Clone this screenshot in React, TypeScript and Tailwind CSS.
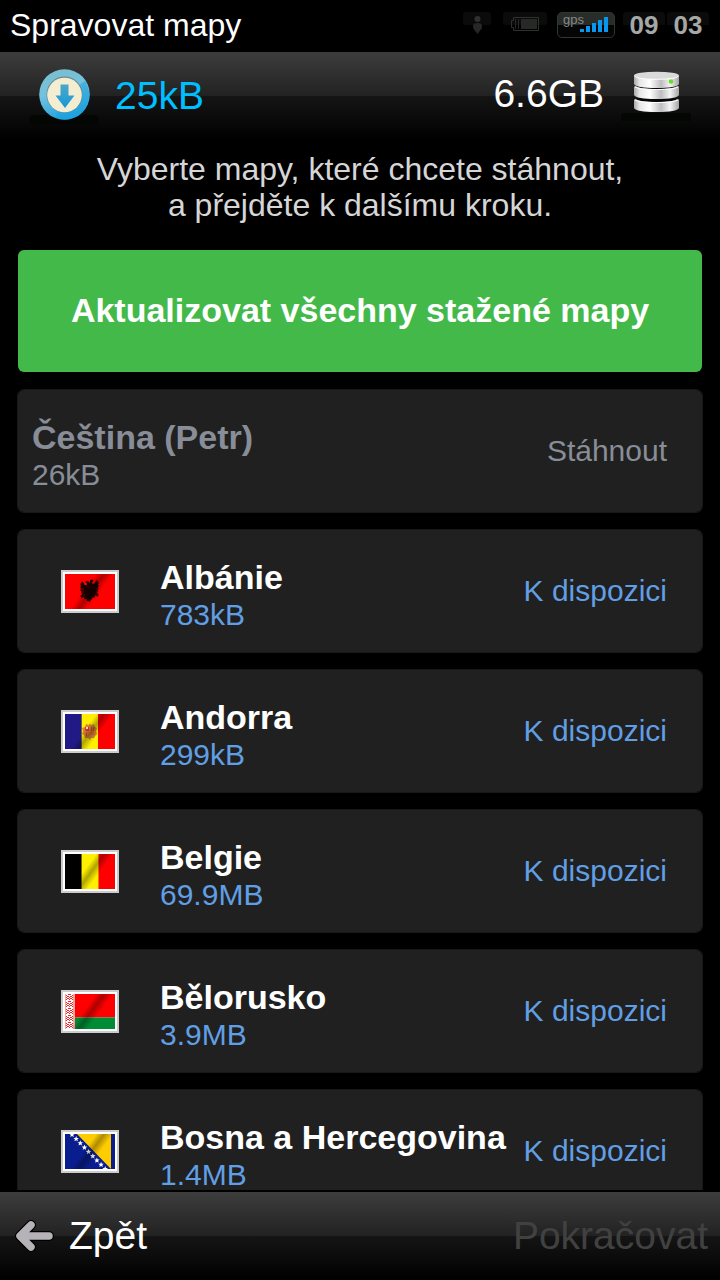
import type { ReactNode } from 'react';

type FlagCode = 'al' | 'ad' | 'be' | 'by' | 'ba';

interface MapItem {
  code: FlagCode;
  name: string;
  size: string;
}

const maps: MapItem[] = [
  { code: 'al', name: 'Albánie', size: '783kB' },
  { code: 'ad', name: 'Andorra', size: '299kB' },
  { code: 'be', name: 'Belgie', size: '69.9MB' },
  { code: 'by', name: 'Bělorusko', size: '3.9MB' },
  { code: 'ba', name: 'Bosna a Hercegovina', size: '1.4MB' },
];

const star = 'M0 -2.8L.8 -.9L2.8 -.8L1.2 .5L1.8 2.5L0 1.4L-1.8 2.5L-1.2 .5L-2.8 -.8L-.8 -.9Z';

const flagArt: Record<FlagCode, ReactNode> = {
  al: (
    <>
      <rect width="50" height="35" fill="#ff0000" />
      <path
        fill="#1c0000"
        d="M25 10l-1-2.500-3-.5-.5 1.500 1.500 1-.5 2-2-.5-1.500-3-1.500-.5v2l-1-.3v2l.8.6-.8.6v1.500l.8.5-.8.8.2 1.500.8.4-.5 1 .5 1.200 1 .2-1.500 2h-.5v1.500l1 .5.3 1 1.200-1.200 1.500-.4-.5 1.600 1.500.8 1-.8.5 2.500 1-.3L25 28l1-2.800 1 .3.5-2.500 1 .8 1.500-.8-.5-1.600 1.500.4 1.200 1.200.3-1 1-.5v-1.500h-.5l-1.500-2 1-.2.5-1.200-.5-1 .8-.4.2-1.500-.8-.8.8-.5v-1.500l-.8-.6.8-.6v-2l-1 .3v-2l-1.500.5-1.500 3-2 .5-.5-2 1.500-1-.5-1.500-3 .5z"
      />
      <path d="M16 15h3M16 18h3M31 15h3M31 18h3M18 21h2M30 21h2M20 23v1M30 23v1" stroke="#a80000" strokeWidth="0.7" />
    </>
  ),
  ad: (
    <>
      <rect width="17" height="35" fill="#211a86" />
      <rect x="16" width="17" height="35" fill="#ffee00" />
      <rect x="33" width="17" height="35" fill="#ff0000" />
      <path d="M16.500 0v35" stroke="#6b6740" />
      <path
        fill="#d88530"
        d="M21 10l3 1 1-2 1 2 3-1 1 3 2 1-1 3 1 3-2 2-1 2-3 0-1 2-2-2-3 0-1-3-2-1 1-3-1-3 3-1z"
      />
      <rect x="20" y="13" width="4" height="4" fill="#e5352b" />
      <path d="M21 13h2v2h-2zM26 19h2v1h-2z" fill="#f5e3c8" />
      <path d="M26.500 13v4M28.500 13v4M21.500 18v4" stroke="#d8452a" strokeWidth="1" />
      <rect x="25" y="18" width="4" height="3" fill="#ea6a22" />
    </>
  ),
  be: (
    <>
      <rect width="17" height="35" fill="#000000" />
      <rect x="16" width="18" height="35" fill="#fff000" />
      <rect x="33" width="17" height="35" fill="#ff0000" />
      <path d="M16.500 0v35" stroke="#776d00" />
      <path d="M33.500 0v35" stroke="#f07a00" />
    </>
  ),
  by: (
    <>
      <rect width="50" height="23.500" fill="#ff0000" />
      <rect y="23.500" width="50" height="11.500" fill="#008c34" />
      <rect width="10" height="35" fill="#ff9f98" />
      <rect x="1" width="7" height="35" fill="#ffffff" />
      {[0, 7, 14, 21, 28].map((y) => (
        <path
          key={y}
          transform={`translate(0 ${y})`}
          d="M1 1h1v1H1zM3 0h3v1H3zM7 1h1v1H7zM2 2h2v1H2zM5 2h2v1H5zM4 3h1v1H4zM2 4h2v1H2zM5 4h2v1H5zM1 5h1v1H1zM4 5h1v1H4zM7 5h1v1H7zM1 3h1v1H1zM7 3h1v1H7z"
          fill="#ee2525"
        />
      ))}
    </>
  ),
  ba: (
    <>
      <rect width="50" height="35" fill="#0a1d8e" />
      <path d="M12 0h34v35z" fill="#ffcc00" />
      {[0, 1, 2, 3, 4, 5, 6, 7, 8].map((i) => (
        <path key={i} d={star} transform={`translate(${7 + i * 4.15} ${0.5 + i * 4.3})`} fill="#ffffff" />
      ))}
    </>
  ),
};

function Flag({ code }: { code: FlagCode }) {
  return (
    <span className="shrink-0 border-2 border-[#cccccc] bg-white p-0.5">
      <svg width="50" height="35" viewBox="0 0 50 35" className="block" aria-hidden="true">
        <defs>
          <linearGradient id={`fold-${code}`} gradientUnits="userSpaceOnUse" x1="20" y1="12" x2="35" y2="23">
            <stop offset="0.1" stopColor="#000" stopOpacity="0" />
            <stop offset="0.45" stopColor="#000" stopOpacity="0.32" />
            <stop offset="0.85" stopColor="#000" stopOpacity="0" />
          </linearGradient>
        </defs>
        {flagArt[code]}
        <path d="M0 0h50v35H0z" fill={`url(#fold-${code})`} />
      </svg>
    </span>
  );
}

function DownloadIcon() {
  return (
    <svg width="72" height="64" viewBox="0 0 72 64" className="shrink-0" aria-hidden="true">
      <defs>
        <linearGradient id="ring" x1="0" y1="0" x2="0.3" y2="1">
          <stop offset="0" stopColor="#7dbdcc" />
          <stop offset="0.5" stopColor="#73c3df" />
          <stop offset="1" stopColor="#25a4df" />
        </linearGradient>
        <linearGradient id="arrow" x1="0" y1="0" x2="0" y2="1">
          <stop offset="0" stopColor="#4fa7c6" />
          <stop offset="1" stopColor="#1598dc" />
        </linearGradient>
      </defs>
      <rect x="1" y="51" width="70" height="10" rx="5" fill="#030603" />
      <circle cx="36.500" cy="30.500" r="25.300" fill="url(#ring)" />
      <path d="M37 31L57 17A25 25 0 0 1 27 54z" fill="#1ca0de" opacity="0.5" />
      <circle cx="36.500" cy="30.500" r="18" fill="#6b8b8f" />
      <circle cx="36.500" cy="31" r="17.300" fill="#f3eed2" />
      <path d="M32.500 20.500h8v11h6L37 44l-9.500-12.500h5z" fill="url(#arrow)" />
    </svg>
  );
}

function StorageIcon() {
  return (
    <svg width="70" height="54" viewBox="0 0 70 54" className="shrink-0" aria-hidden="true">
      <defs>
        <linearGradient id="disk">
          <stop offset="0" stopColor="#a9a9a9" />
          <stop offset="0.12" stopColor="#e6e6e6" />
          <stop offset="0.35" stopColor="#ffffff" />
          <stop offset="0.6" stopColor="#bdbdc0" />
          <stop offset="0.8" stopColor="#f4f4f4" />
          <stop offset="1" stopColor="#a4a4a4" />
        </linearGradient>
      </defs>
      <rect y="46" width="70" height="8" rx="2" fill="#030603" />
      {[33, 20].map((y) => (
        <g key={y} transform={`translate(13 ${y})`}>
          <ellipse cx="22.500" cy="0" rx="21" ry="3.500" fill="#050505" />
          <path d="M0 0Q0 -1 2 -1Q5 2 22.500 2Q40 2 43 -1Q45 -1 45 0V8Q43 12 22.500 12Q2 12 0 8z" fill="url(#disk)" />
          <path d="M1 0Q5 2.500 22.500 2.500Q40 2.500 44 0" fill="none" stroke="#ffffff" />
        </g>
      ))}
      <path d="M13 9V17Q15 21 35.500 21Q56 21 58 17V9z" fill="url(#disk)" />
      <ellipse cx="35.500" cy="8.500" rx="22.500" ry="3.800" fill="#dadada" />
      <path d="M13.500 9Q15 12.300 35.500 12.300Q56 12.300 57.500 9" fill="none" stroke="#ffffff" />
      <circle cx="50" cy="14.500" r="2.300" fill="#63e02a" />
    </svg>
  );
}

function StatusIcons() {
  return (
    <div className="flex items-center">
      <svg width="28" height="26" viewBox="0 0 28 26" aria-label="Profil">
        <rect width="28" height="13" rx="3" fill="#0b0b0b" />
        <circle cx="14.500" cy="7" r="3" fill="#303030" />
        <path d="M10 14q0-3 4.500-3t4.500 3q0 3-1.500 4l-3 4-3-4q-1.500-1-1.500-4z" fill="#252825" />
      </svg>
      <svg width="44" height="26" viewBox="0 0 44 26" className="ml-3" aria-label="Baterie">
        <rect width="44" height="13" rx="3" fill="#0b0b0b" />
        <path d="M10.500 5.500h25v13h-25v-3h-2v-7h2z" fill="none" stroke="#2f302f" />
        <path d="M12 7h1v10h-1zM15 7h1v10h-1zM18 7h16v10H18z" fill="#272927" />
      </svg>
      <div className="relative ml-2.5 h-[26px] w-[58px] overflow-hidden rounded-[5px] border border-[#303630] bg-linear-to-b from-[#292d29] from-50% to-[#050505] to-50%">
        <span className="absolute top-0 left-[5px] text-[13px] leading-[14px] text-[#858885]">gps</span>
        <svg width="29" height="15" viewBox="0 0 29 15" className="absolute top-1 left-[22px]" aria-hidden="true">
          <path d="M0 12h4v3H0zM6 9h4v6H6zM12 6h4v9h-4zM18 3h4v12h-4zM24 0h4v15h-4z" fill="#0896ef" />
        </svg>
      </div>
      <time className="ml-2 flex gap-0.5 text-[26px] leading-[26px] font-bold text-[#a5a8a5]">
        <span className="w-[42px] rounded bg-linear-to-b from-[#0b0b0b] from-50% to-black to-50% text-center">09</span>
        <span className="w-[42px] rounded bg-linear-to-b from-[#0b0b0b] from-50% to-black to-50% text-center">03</span>
      </time>
    </div>
  );
}

export default function App() {
  return (
    <div className="flex h-screen flex-col bg-black font-['Liberation_Sans',Arial,sans-serif] text-white">
      <header className="flex h-[52px] shrink-0 items-center justify-between pr-[11px] pb-[3px] pl-[10px]">
        <h1 className="text-[32px] leading-9">Spravovat mapy</h1>
        <StatusIcons />
      </header>

      <section className="flex h-[88px] shrink-0 items-center justify-between bg-[linear-gradient(#3d3d3d,#222_50%,#151515_50%,#000)] pr-[29px] pl-7 text-[39px] leading-[44px]">
        <div className="flex items-center gap-[15px] text-[#00bfff]">
          <DownloadIcon />
          <span>25kB</span>
        </div>
        <div className="flex items-center gap-[17px] pb-1">
          <span>6.6GB</span>
          <StorageIcon />
        </div>
      </section>

      <main className="min-h-0 flex-1 overflow-y-auto px-[18px] pt-[11px] [scrollbar-width:none]">
        <p className="text-center text-[32px] leading-9 text-[#d6d6d6]">
          Vyberte mapy, které chcete stáhnout,
          <br />a přejděte k dalšímu kroku.
        </p>

        <button
          type="button"
          className="mt-[27px] block h-[122px] w-full rounded-md bg-[#43b94a] pb-0.5 text-[34px] leading-10 font-bold"
        >
          Aktualizovat všechny stažené mapy
        </button>

        <ul className="mt-[18px] flex flex-col gap-[18px] pb-[18px]">
          <li>
            <button
              type="button"
              className="flex h-[122px] w-full items-center justify-between rounded-md bg-[#202020] pr-[35px] pl-[14px] text-left text-[#888d97] outline outline-[#181818]"
            >
              <span className="flex flex-col pt-2.5">
                <span className="text-[34px] leading-[37px] font-bold">Čeština (Petr)</span>
                <span className="text-[30px] leading-[37px]">26kB</span>
              </span>
              <span className="text-[30px] leading-9">Stáhnout</span>
            </button>
          </li>
          {maps.map((map) => (
            <li key={map.code}>
              <button
                type="button"
                className="flex h-[122px] w-full items-center rounded-md bg-[#202020] pr-[35px] pl-[43px] text-left outline outline-[#181818]"
              >
                <Flag code={map.code} />
                <span className="ml-[41px] flex min-w-0 flex-1 flex-col pt-2.5 whitespace-nowrap">
                  <span className="text-[34px] leading-[37px] font-bold">{map.name}</span>
                  <span className="text-[30px] leading-[37px] text-[#619fe5]">{map.size}</span>
                </span>
                <span className="shrink-0 text-[30px] leading-9 text-[#619fe5]">K dispozici</span>
              </button>
            </li>
          ))}
        </ul>
      </main>

      <footer className="mt-0.5 flex h-[88px] shrink-0 items-center justify-between bg-[linear-gradient(#3d3d3d,#222_50%,#151515_50%,#000)] pr-3 pl-[14px] text-[39px] leading-[44px]">
        <button type="button" className="flex items-center gap-[15px]">
          <svg width="40" height="34" viewBox="0 0 40 34" aria-hidden="true">
            <g fill="none" strokeLinecap="round" strokeLinejoin="round">
              <path d="M17 6L6 17l11 11M7 17h28" stroke="#000000" strokeWidth="10" />
              <path d="M17 6L6 17l11 11M7 17h28" stroke="#b5b3b7" strokeWidth="7.5" />
              <path d="M6 17l5-5v10z" fill="#b5b3b7" />
            </g>
          </svg>
          <span>Zpět</span>
        </button>
        <button type="button" disabled className="text-[#414141]">
          Pokračovat
        </button>
      </footer>
    </div>
  );
}
